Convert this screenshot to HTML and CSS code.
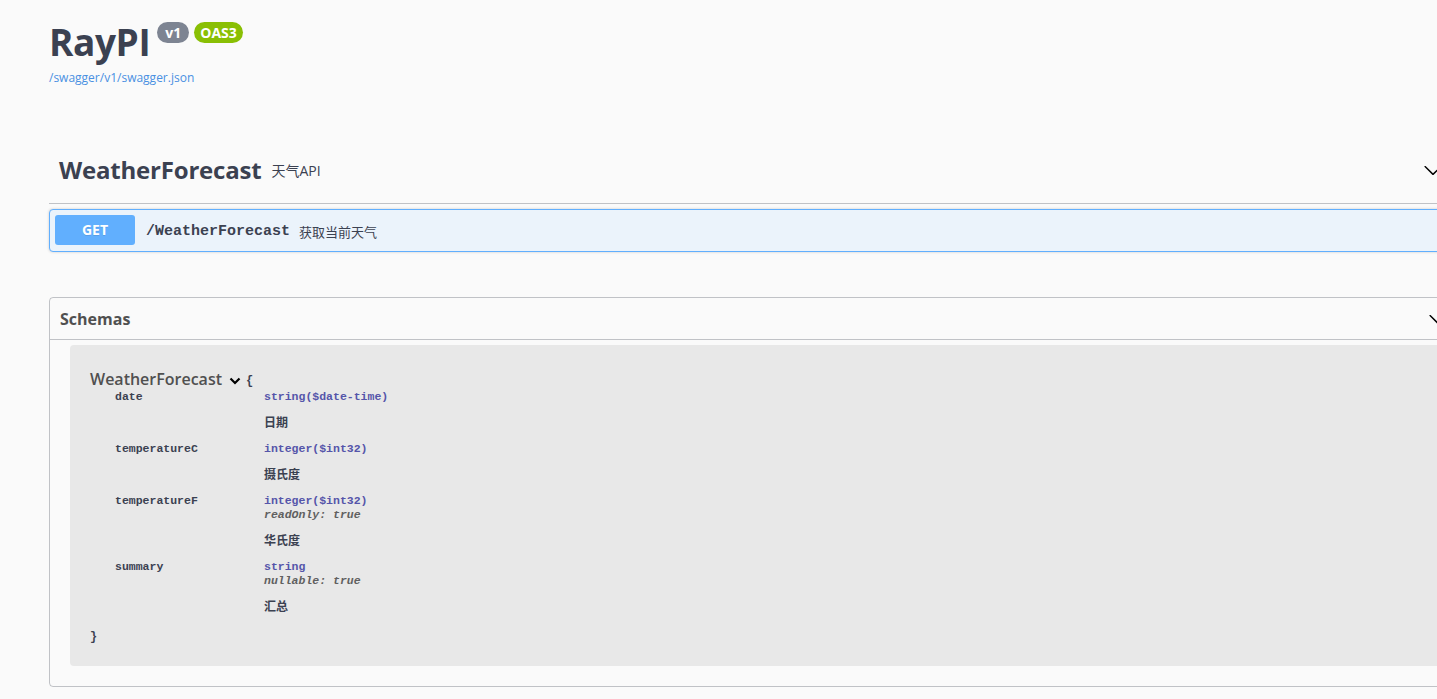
FILE: index.html
```html
<!DOCTYPE html>
<html lang="zh">
<head>
<meta charset="utf-8">
<title>RayPI</title>
<link rel="stylesheet" href="styles.css">
</head>
<body>
<div class="wrapper">
  <div class="info">
    <h2 class="title">RayPI <span class="badges"><span class="badge v">v1</span><span class="badge oas">OAS3</span></span></h2>
    <a class="url" href="#">/swagger/v1/swagger.json</a>
  </div>

  <section class="tag-section">
    <h3 class="tag">
      <span class="tag-name">WeatherForecast</span>
      <span class="tag-desc">天气API</span>
      <svg class="arrow tag-arrow" width="20" height="20" viewBox="0 0 20 20"><path d="M17.418 6.109c.272-.268.709-.268.979 0s.271.701 0 .969l-7.908 7.830c-.27.268-.707.268-.979 0l-7.908-7.830c-.27-.268-.27-.701 0-.969.271-.268.709-.268.979 0L10 13.25l7.418-7.141z"/></svg>
    </h3>
    <div class="opblock">
      <span class="method">GET</span>
      <span class="path">/WeatherForecast</span>
      <span class="op-desc">获取当前天气</span>
    </div>
  </section>

  <section class="models">
    <h4 class="models-head">
      <span>Schemas</span>
      <svg class="arrow models-arrow" width="20" height="20" viewBox="0 0 20 20"><path d="M17.418 6.109c.272-.268.709-.268.979 0s.271.701 0 .969l-7.908 7.830c-.27.268-.707.268-.979 0l-7.908-7.830c-.27-.268-.27-.701 0-.969.271-.268.709-.268.979 0L10 13.25l7.418-7.141z"/></svg>
    </h4>
    <div class="model-container">
      <div class="model-title-row">
        <span class="model-title">WeatherForecast</span>
        <svg class="small-arrow" width="12" height="8" viewBox="0 0 12 8"><polyline points="1.5,1.5 6,6 10.5,1.5" fill="none" stroke="#000" stroke-width="2.2"/></svg>
        <span class="brace">{</span>
      </div>
      <div class="props">
        <div class="prop-name">date</div>
        <div class="prop-val">
          <div class="type">string($date-time)</div>
          <div class="desc">日期</div>
        </div>
        <div class="prop-name">temperatureC</div>
        <div class="prop-val">
          <div class="type">integer($int32)</div>
          <div class="desc">摄氏度</div>
        </div>
        <div class="prop-name">temperatureF</div>
        <div class="prop-val">
          <div class="type">integer($int32)</div>
          <div class="extra">readOnly: true</div>
          <div class="desc">华氏度</div>
        </div>
        <div class="prop-name">summary</div>
        <div class="prop-val">
          <div class="type">string</div>
          <div class="extra">nullable: true</div>
          <div class="desc">汇总</div>
        </div>
      </div>
      <div class="brace close">}</div>
    </div>
  </section>
</div>
</body>
</html>
```

FILE: styles.css
```css
html, body {
  margin: 0;
  padding: 0;
  background: #fafafa;
  overflow: hidden;
}
body {
  font-family: "Open Sans", "Noto Sans CJK SC", sans-serif;
  color: #3b4151;
}
.wrapper {
  width: 1414px;
  margin-left: 49px;
}
.info {
  padding-top: 16px;
  margin-bottom: 51px;
}
.title {
  margin: 0;
  font-size: 37px;
  font-weight: 700;
  line-height: 52px;
  color: #3b4151;
  display: flex;
  align-items: flex-start;
  letter-spacing: -0.4px;
}
.badges {
  display: flex;
  gap: 5px;
  margin-left: 7px;
  margin-top: 6px;
}
.badge {
  display: inline-block;
  font-size: 14px;
  line-height: 21px;
  height: 21px;
  padding: 0 6px;
  border-radius: 57px;
  color: #fff;
  font-weight: 700;
  letter-spacing: 0;
  font-family: "Open Sans", sans-serif;
}
.badge.v { background: #7d8492; padding: 0 8px; }
.badge.oas { background: #89bf04; }
.url {
  display: block;
  font-size: 12px;
  color: #4990e2;
  text-decoration: none;
  line-height: 16px;
  margin-top: 2px;
}
.tag {
  margin: 0;
  display: flex;
  align-items: center;
  padding: 12px 20px 12px 10px;
  border-bottom: 1px solid rgba(59, 65, 81, 0.3);
  height: 42px;
}
.tag-name {
  font-size: 24px;
  font-weight: 700;
  letter-spacing: -0.2px;
  margin-top: -2px;
}
.tag-desc {
  font-size: 14px;
  font-weight: 400;
  margin-left: 10px;
  margin-top: -1px;
  flex: 1;
}
.arrow {
  fill: #000;
  flex: none;
}
.opblock {
  margin-top: 5px;
  display: flex;
  align-items: center;
  padding: 5px 5px 6px;
  border: 1px solid #61affe;
  background: #ebf3fb;
  border-radius: 4px;
  box-shadow: 0 0 3px rgba(0, 0, 0, 0.19);
  height: 30px;
}
.method {
  width: 80px;
  height: 30px;
  line-height: 30px;
  text-align: center;
  background: #61affe;
  color: #fff;
  font-weight: 700;
  font-size: 14px;
  border-radius: 3px;
  text-shadow: 0 1px 0 rgba(0, 0, 0, 0.1);
}
.path {
  font-family: "Liberation Mono", monospace;
  font-size: 15px;
  font-weight: 700;
  color: #3b4151;
  margin-left: 11px;
  margin-top: 2px;
}
.op-desc {
  font-size: 13px;
  margin-left: 9px;
  margin-top: 2px;
  color: #3b4151;
}
.models {
  margin-top: 45px;
  border: 1px solid rgba(59, 65, 81, 0.3);
  border-radius: 4px;
  padding-bottom: 20px;
}
.models-head {
  margin: 0;
  display: flex;
  align-items: center;
  justify-content: space-between;
  padding: 10px 14px 10px 10px;
  font-size: 16px;
  font-weight: 700;
  height: 21px;
  border-bottom: 1px solid rgba(59, 65, 81, 0.3);
  color: #505050;
}
.model-container {
  margin: 5px 20px 0;
  background: #e8e8e8;
  border-radius: 4px 0 0 4px;
  padding: 24px 20px 21px;
}
.model-title-row {
  display: flex;
  align-items: center;
  height: 21px;
}
.model-title {
  font-size: 16px;
  font-weight: 600;
  color: #505050;
  margin-top: -2px;
}
.small-arrow {
  margin-left: 7px;
  margin-top: 2px;
}
.brace {
  font-family: "Liberation Mono", monospace;
  font-size: 12px;
  font-weight: 700;
  color: #3b4151;
  margin-left: 5px;
  margin-top: 2px;
}
.brace.close {
  margin: 3px 0 0;
  line-height: 16px;
}
.props {
  display: grid;
  grid-template-columns: 149px 1fr;
  padding-left: 25px;
  font-family: "Liberation Mono", monospace;
  font-size: 11.5px;
  line-height: 14px;
}
.prop-name {
  font-weight: 700;
  color: #3b4151;
}
.prop-val {
  padding-bottom: 12px;
}
.type {
  color: #55a;
  font-weight: 700;
}
.extra {
  font-style: italic;
  color: #606060;
  font-weight: 700;
}
.desc {
  font-family: "Noto Sans CJK SC", sans-serif;
  font-size: 12px;
  font-weight: 700;
  color: #3b4151;
  margin-top: 10px;
  line-height: 16px;
}
```
